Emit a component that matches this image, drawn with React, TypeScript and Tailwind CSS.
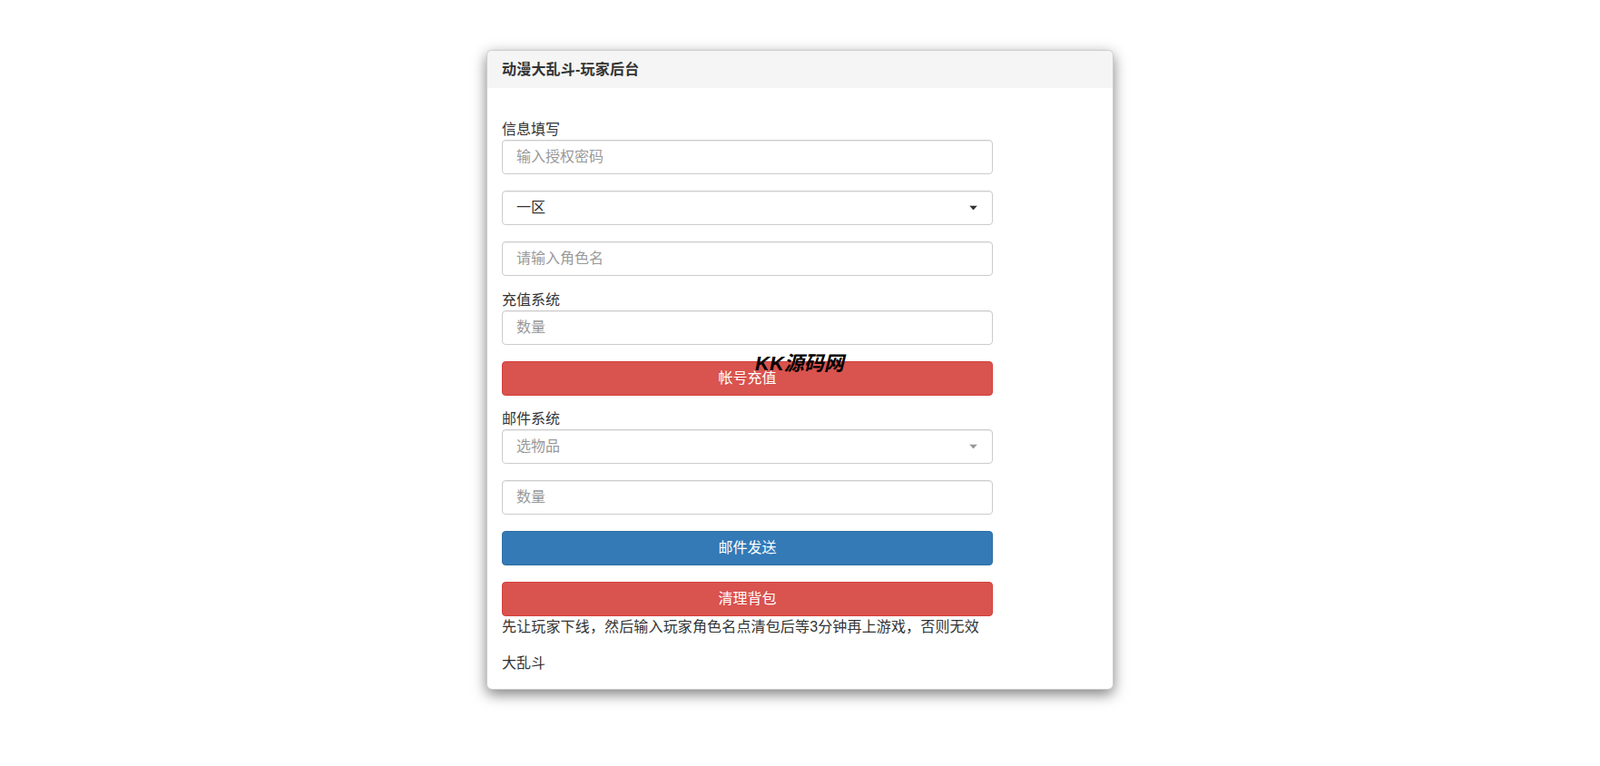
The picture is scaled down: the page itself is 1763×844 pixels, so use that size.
import { useState } from "react";

const font = { fontFamily: '"Liberation Sans", "Noto Sans CJK SC", sans-serif' };

function Caret({ muted }: { muted?: boolean }) {
  return (
    <svg width="9" height="5" viewBox="0 0 9 5" className="absolute right-[16px] top-1/2 -translate-y-1/2">
      <path d="M0 0 L9 0 L4.5 5 Z" fill={muted ? "#999" : "#333"} />
    </svg>
  );
}

function Field({ placeholder }: { placeholder: string }) {
  return (
    <input
      placeholder={placeholder}
      className="block h-[38px] w-full rounded-[4px] border border-[#ccc] px-[15px] text-[16px] text-[#555] shadow-[inset_0_1px_1px_rgba(0,0,0,0.075)] outline-none placeholder:text-[#999]"
    />
  );
}

function Select({ value, muted }: { value: string; muted?: boolean }) {
  return (
    <div className="relative flex h-[38px] w-full items-center rounded-[4px] border border-[#ccc] px-[15px] text-[16px] shadow-[inset_0_1px_1px_rgba(0,0,0,0.075)]">
      <span className={muted ? "text-[#999]" : "text-[#333]"}>{value}</span>
      <Caret muted={muted} />
    </div>
  );
}

function Button({ label, color }: { label: string; color: "red" | "blue" }) {
  const cls =
    color === "red"
      ? "bg-[#d9534f] border-[#d43f3a]"
      : "bg-[#337ab7] border-[#2e6da4]";
  return (
    <button className={`block h-[38px] w-full rounded-[4px] border text-[16px] text-white ${cls}`}>
      {label}
    </button>
  );
}

export default function App() {
  const [zone] = useState("一区");
  return (
    <div className="min-h-[844px] bg-white pt-[55px] text-[#333]" style={font}>
      <div className="mx-auto w-[691px] overflow-hidden rounded-[6px] border border-[rgba(0,0,0,0.2)] bg-white shadow-[0_5px_15px_rgba(0,0,0,0.5)]">
        {/* Header */}
        <div className="flex h-[41px] items-center bg-[#f5f5f5] px-[16px] text-[16px] font-bold tracking-[0.2px] text-[#333]">
          动漫大乱斗-玩家后台
        </div>

        {/* Body */}
        <div className="relative px-[16px] pb-[17px] pt-[35px]">
          <div className="w-[541px]">
            <div className="h-[22px] text-[16px] leading-[22px]">信息填写</div>
            <Field placeholder="输入授权密码" />
            <div className="mt-[18px]">
              <Select value={zone} />
            </div>
            <div className="mt-[18px]">
              <Field placeholder="请输入角色名" />
            </div>

            <div className="mt-[16px] h-[22px] text-[16px] leading-[22px]">充值系统</div>
            <Field placeholder="数量" />
            <div className="mt-[18px]">
              <Button label="帐号充值" color="red" />
            </div>

            <div className="mt-[15px] h-[22px] text-[16px] leading-[22px]">邮件系统</div>
            <Select value="选物品" muted />
            <div className="mt-[18px]">
              <Field placeholder="数量" />
            </div>
            <div className="mt-[18px]">
              <Button label="邮件发送" color="blue" />
            </div>
            <div className="mt-[18px]">
              <Button label="清理背包" color="red" />
            </div>

            <p className="mt-[1px] whitespace-nowrap text-[16px] leading-[22px] tracking-[0.15px]">
              先让玩家下线，然后输入玩家角色名点清包后等3分钟再上游戏，否则无效
            </p>
            <p className="mt-[18px] text-[16px] leading-[22px]">大乱斗</p>
          </div>

          {/* watermark */}
          <div className="absolute left-[295px] top-[293px] text-[22px] font-bold italic leading-none text-black">
            KK源码网
          </div>
        </div>
      </div>
    </div>
  );
}
